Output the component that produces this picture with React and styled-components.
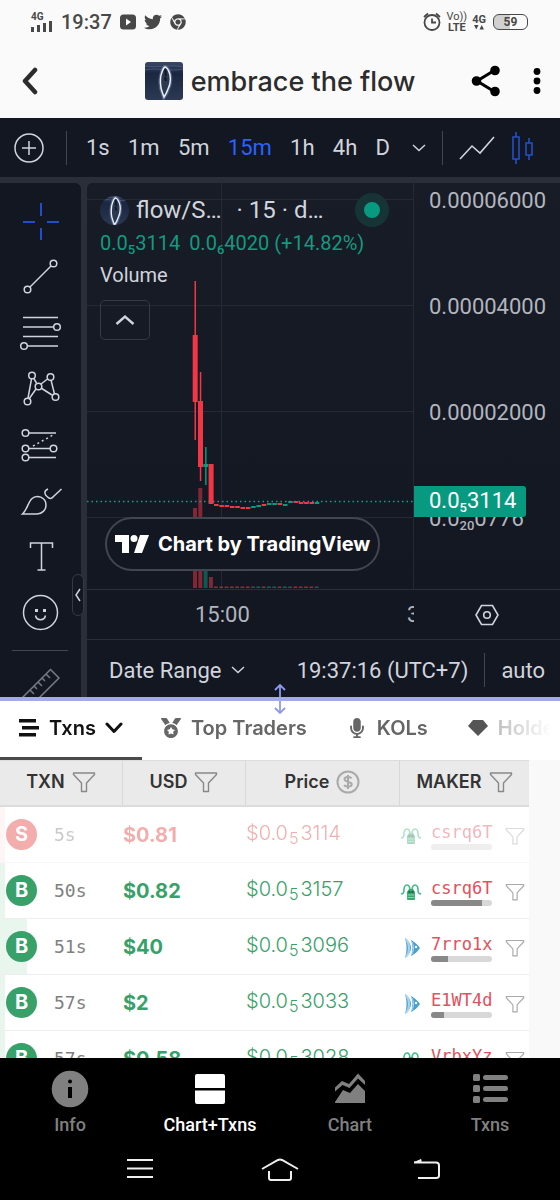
import React from "react";
import styled, { createGlobalStyle, css } from "styled-components";
import { FaChrome, FaMedal, FaMicrophone, FaTwitter } from "react-icons/fa";

const intervals = ["1s", "1m", "5m", "15m", "1h", "4h", "D"];

const trades = [
  { side: "S", age: "5s", usd: "$0.81", price: "3114", pool: "bug", maker: "csrq6T", share: 0, depth: 5, fresh: true },
  { side: "B", age: "50s", usd: "$0.82", price: "3157", pool: "bug", maker: "csrq6T", share: 83, depth: 5 },
  { side: "B", age: "51s", usd: "$40", price: "3096", pool: "fish", maker: "7rro1x", share: 27, depth: 27 },
  { side: "B", age: "57s", usd: "$2", price: "3033", pool: "fish", maker: "E1WT4d", share: 21, depth: 5 },
  { side: "B", age: "57s", usd: "$0.58", price: "3028", pool: "bug", maker: "VrbxYz", share: 40, depth: 5 },
];

const RED = "#f23645";
const GREEN = "#089981";

// [colour, high, low, top, bottom]
const bigCandles = [
  [RED, 98, 257, 152, 219],
  [RED, 189, 298, 218, 284],
  [GREEN, 264, 302, 281, 284],
  [RED, 281, 321, 281, 321],
];

// [is up, y]
const smallCandles = [
  [0, 321], [0, 322], [0, 322], [0, 323], [0, 323], [0, 324], [0, 324],
  [1, 323], [1, 322], [0, 321], [1, 320], [1, 320], [0, 320], [1, 321],
  [1, 318], [0, 318], [0, 319], [0, 319], [0, 319], [1, 319],
];

// [colour, top]
const volumes = [
  [RED, 325],
  [RED, 305],
  [GREEN, 345],
  [RED, 394],
];

function FeatherArt() {
  return (
    <>
      <defs>
        <linearGradient id="night" x1="0" y1="0" x2="0" y2="1">
          <stop offset="0" stopColor="#3a4868" />
          <stop offset="0.3" stopColor="#1b2741" />
          <stop offset="1" stopColor="#2b3953" />
        </linearGradient>
      </defs>
      <rect width="38" height="38" fill="url(#night)" />
      <path d="M0 8c10-3 26 2 38-1M0 4c12 2 26-2 38 1" stroke="#5b6b8c" fill="none" opacity="0.6" />
      <path d="M20 5c3 1 4 4 5 8 1 6 0 10-2 14-1 3-2 5-4 8-1-3-2-5-3-9-1-6-1-11 1-16 1-2 1-4 3-5z" fill="none" stroke="#8fa3c4" strokeWidth="4" opacity="0.4" />
      <path d="M20 5c3 1 4 4 5 8 1 6 0 10-2 14-1 3-2 5-4 8-1-3-2-5-3-9-1-6-1-11 1-16 1-2 1-4 3-5z" fill="#2c3850" stroke="#e8eef8" strokeWidth="1.5" />
      <path d="M20 7c1 2 0 4 1 7M20 15l1 4" stroke="#0f1626" strokeWidth="2" fill="none" />
    </>
  );
}

function Funnel({ size = 24, color = "#888" }) {
  return (
    <svg width={size} height={size} viewBox="0 0 24 24" fill="none" stroke={color} strokeWidth="1.4" strokeLinejoin="round">
      <path d="M1.5 3h21v1.5L14.5 13v8.5h-5V13L1.5 4.5z" />
    </svg>
  );
}

function PoolIcon({ kind }) {
  if (kind === "fish") {
    return (
      <svg width="22" height="22" viewBox="0 0 22 22">
        <path d="M5 1c4 3 6 7 6 10s-2 7-6 10c2-6 2-14 0-20z" fill="#4fa3d6" />
        <path d="M11 3c4 2 7 5 9 8-2 3-5 6-9 8 2-5 2-11 0-16z" fill="#4aa0d4" />
        <path d="M6 2c4 5 4 13 0 18" stroke="#a9d6ef" strokeWidth="2" fill="none" />
        <path d="M12 5c2 4 2 8 0 12" stroke="#a9d6ef" strokeWidth="1" fill="none" />
        <circle cx="16" cy="10" r="1.2" fill="#fff" />
      </svg>
    );
  }
  return (
    <svg width="22" height="22" viewBox="0 0 22 22" fill="none">
      <path d="M1 13c2 0 3-1 3-4s1-5 3-5 3 3 3 6M21 13c-2 0-3-1-3-4s-1-5-3-5-3 3-3 6" stroke="#3fbd84" strokeWidth="1.6" />
      <path d="M9 8h4l2 3v7q0 1-1 1H8q-1 0-1-1v-7z" fill="#3aa873" />
      <path d="M7.5 14h7M7.5 16.5h7" stroke="#86d3ab" />
      <path d="M8.5 11h2M11.5 11h2" stroke="#174a36" strokeWidth="1.6" />
    </svg>
  );
}

const tools = [
  {
    label: "Cross",
    active: true,
    art: <path d="M29 9v13M29 34v12M11 28h12M35 28h12" />,
  },
  {
    label: "Trend line",
    art: (
      <>
        <path d="M18 37 39 16" />
        <circle cx="15.5" cy="39.5" r="3.3" />
        <circle cx="41.5" cy="13.5" r="3.3" />
      </>
    ),
  },
  {
    label: "Fib retracement",
    art: (
      <>
        <path d="M11 11.5h35M11 21h31M11 30.5h35M16 40h30" />
        <circle cx="45" cy="21" r="3.3" />
        <circle cx="12" cy="40" r="3.3" />
      </>
    ),
  },
  {
    label: "XABCD pattern",
    art: (
      <>
        <path d="M21.5 16l3 5M29 22l6.5-5M39 18l3.5 14M29 26l11 7M24 27l-7 10M19.5 17l-3.5 19" />
        <circle cx="20" cy="13.5" r="3.3" />
        <circle cx="38.5" cy="15" r="3.3" />
        <circle cx="26.5" cy="24.5" r="3.3" />
        <circle cx="15.5" cy="39.5" r="3.3" />
        <circle cx="43.5" cy="35" r="3.3" />
      </>
    ),
  },
  {
    label: "Long position",
    art: (
      <>
        <path d="M17 15h27M17 30.5h21M17 39.5h27" />
        <path d="M21 28 42 16.5" strokeDasharray="2 3" />
        <circle cx="13.5" cy="15" r="3.3" />
        <circle cx="13.5" cy="30.5" r="3.3" />
        <circle cx="41.5" cy="30.5" r="3.3" />
        <circle cx="13.5" cy="39.5" r="3.3" />
      </>
    ),
  },
  {
    label: "Brush",
    art: (
      <>
        <path d="M10.5 40H25a9 9 0 0 0 9-9 8.5 8.5 0 0 0-14.5-6C16 28.500 15 36 10.500 40z" />
        <path d="M36 15c-4 1.5-4 5-1 7.5 3 3 4.5 2.5 7-.5l7.500-7" />
      </>
    ),
  },
  {
    label: "Text",
    art: <path d="M18.5 18v-5h22v5M29.5 13v27M25.5 40h8" />,
  },
  {
    label: "Icons",
    art: (
      <>
        <circle cx="28.5" cy="26.5" r="17" />
        <path d="M23.5 29.5c1 5.500 9 5.500 10 0" />
        <path d="M24.5 23v3M32.5 23v3" strokeWidth="3" />
      </>
    ),
  },
];

function StatusBar() {
  return (
    <StyledStatus>
      <Signal>
        <small>4G</small>
        <svg width="22" height="11" viewBox="0 0 22 11" fill="#484848">
          <rect x="0" y="6" width="3" height="5" />
          <rect x="6" y="4" width="3" height="7" />
          <rect x="12" y="2" width="3" height="9" />
          <rect x="18" y="0" width="3" height="11" />
        </svg>
      </Signal>
      <Clock>19:37</Clock>
      <svg width="16" height="16" viewBox="0 0 16 16">
        <rect width="16" height="15" y="0.5" rx="3.5" fill="#484848" />
        <path d="M6 4.500v7l5-3.500z" fill="#fff" />
      </svg>
      <FaTwitter size={18} />
      <FaChrome size={16} />
      <StatusSpacer />
      <StatusGroup>
        <svg width="18" height="20" viewBox="0 0 18 20" fill="none" stroke="#484848" strokeWidth="1.8">
          <circle cx="9" cy="10.5" r="7.5" />
          <path d="M9 6.500v4h4M1 5l4-3.500M17 5l-4-3.500" />
        </svg>
        <StackedText>
          <span>Vo))</span>
          <strong>LTE</strong>
        </StackedText>
        <StackedText>
          <strong>4G</strong>
          <svg width="10" height="5" viewBox="0 0 10 5" fill="#484848">
            <path d="M0 0h4.500L2.300 4.500zM5.500 4.500H10L7.700 0z" />
          </svg>
        </StackedText>
        <Battery>59</Battery>
      </StatusGroup>
    </StyledStatus>
  );
}

function Header() {
  return (
    <StyledHeader>
      <IconButton aria-label="Back">
        <svg width="22" height="28" viewBox="0 0 22 28" fill="none" stroke="#2c2c2c" strokeWidth="4.5" strokeLinecap="round" strokeLinejoin="round">
          <path d="M16 3 6 14l10 11" />
        </svg>
      </IconButton>
      <Title>
        <TokenImage viewBox="0 0 38 38">
          <FeatherArt />
        </TokenImage>
        embrace the flow
      </Title>
      <HeaderActions>
        <IconButton aria-label="Share">
          <svg width="30" height="32" viewBox="0 0 30 32" stroke="#000" strokeWidth="3">
            <path d="M24 5 6 16l18 11" fill="none" />
            <circle cx="24" cy="5.5" r="3.3" />
            <circle cx="5.500" cy="16" r="3.3" />
            <circle cx="24" cy="26.5" r="3.3" />
          </svg>
        </IconButton>
        <IconButton aria-label="More">
          <svg width="8" height="28" viewBox="0 0 8 28">
            <circle cx="4" cy="4.5" r="3.4" />
            <circle cx="4" cy="14" r="3.4" />
            <circle cx="4" cy="23.5" r="3.4" />
          </svg>
        </IconButton>
      </HeaderActions>
    </StyledHeader>
  );
}

function ChartToolbar() {
  return (
    <StyledToolbar>
      <AddButton aria-label="Add symbol">
        <svg width="30" height="30" viewBox="0 0 30 30" fill="none" stroke="#d1d4dc" strokeWidth="1.5">
          <circle cx="15" cy="15" r="14" />
          <path d="M8 15h14M15 8v14" />
        </svg>
      </AddButton>
      <Rule />
      <Intervals>
        {intervals.map((item) => (
          <Interval key={item} $active={item === "15m"}>
            {item}
          </Interval>
        ))}
      </Intervals>
      <IconButton aria-label="More intervals">
        <svg width="14" height="8" viewBox="0 0 14 8" fill="none" stroke="#d1d4dc" strokeWidth="1.5">
          <path d="m1 1 6 5.500L13 1" />
        </svg>
      </IconButton>
      <Rule />
      <IconButton aria-label="Line chart">
        <svg width="36" height="26" viewBox="0 0 36 26" fill="none" stroke="#d1d4dc" strokeWidth="1.6">
          <path d="M1 24 13 11l8 7L35 2" />
        </svg>
      </IconButton>
      <IconButton aria-label="Candles">
        <svg width="22" height="34" viewBox="0 0 22 34" fill="none" stroke="#2450c8" strokeWidth="1.6">
          <path d="M2 6h6v22H2zM5 1v5M5 28v5M15 12h6v12h-6zM18 7v5M18 24v5" />
        </svg>
      </IconButton>
    </StyledToolbar>
  );
}

function Candles() {
  return (
    <svg width="100%" height="407" viewBox="0 0 327 407" preserveAspectRatio="xMinYMin slice">
      <path d="M0 16.5h327M0 122.5h327M0 228.5h327M0 334.5h327M134.5 0v407M326.5 0v407" stroke="#252933" />
      {volumes.map(([color, top], i) => (
        <rect key={i} x={106 + i * 5.3} y={top} width="4" height={405 - top} fill={color} opacity="0.5" />
      ))}
      {smallCandles.map(([up, y], i) => (
        <g key={i} fill={up ? GREEN : RED}>
          <rect x={127 + i * 5.3} y={y} width="4.6" height="2" />
          <rect x={127 + i * 5.3} y="403.5" width="3.8" height="1.5" opacity="0.6" />
        </g>
      ))}
      {bigCandles.map(([color, high, low, top, bottom], i) => (
        <g key={i} fill={color}>
          <rect x={107.5 + i * 5.3} y={high} width="1.5" height={low - high} />
          <rect x={105.7 + i * 5.3} y={top} width="5" height={bottom - top} />
        </g>
      ))}
      <path d="M0 318.5h327" stroke="#12a08a" strokeWidth="1.4" strokeDasharray="1.5 3" />
    </svg>
  );
}

function Chart() {
  return (
    <StyledChart>
      <Tools aria-label="Drawing tools">
        {tools.map((tool) => (
          <Tool key={tool.label} aria-label={tool.label} $active={tool.active}>
            <svg width="56" height="56" viewBox="0 0 56 56">
              {tool.art}
            </svg>
          </Tool>
        ))}
        <ToolRule />
        <Tool aria-label="Measure" $dim>
          <svg width="56" height="56" viewBox="0 0 56 56">
            <path d="M38.5 18.5 47 27 19 55l-8.500-8.500zM34 23l4 4M30 27l3 3M26 31l4 4M22 35l3 3M18 39l4 4" />
          </svg>
        </Tool>
      </Tools>
      <Main>
        <Pane>
          <Candles />
          <Overlay>
            <Symbol>
              <svg width="29" height="29" viewBox="3 3 32 32">
                <FeatherArt />
              </svg>
              <span>flow/S…</span>
              <span>· 15 · d…</span>
              <LiveDot />
            </Symbol>
            <Quote>
              <span>
                0.0<sub>5</sub>3114
              </span>
              <span>
                0.0<sub>6</sub>4020 (+14.82%)
              </span>
            </Quote>
            <Study>Volume</Study>
            <Collapse aria-label="Collapse legend">
              <svg width="20" height="12" viewBox="0 0 20 12" fill="none" stroke="#d1d4dc" strokeWidth="2.4">
                <path d="m1.5 10 8.500-7.500 8.500 7.500" />
              </svg>
            </Collapse>
            <Credit href="#tradingview">
              <svg width="34" height="18" viewBox="0 0 34 18" fill="#fff">
                <path d="M0 0h14v18H7V7H0z" />
                <circle cx="19" cy="3.5" r="3.5" />
                <path d="M25 0h9l-7 18h-8z" />
              </svg>
              Chart by TradingView
            </Credit>
          </Overlay>
        </Pane>
        <PriceAxis>
          <span>0.00006000</span>
          <span>0.00004000</span>
          <span>0.00002000</span>
          <span>
            0.0<sub>20</sub>0776
          </span>
          <LastPrice>
            0.0<sub>5</sub>3114
          </LastPrice>
        </PriceAxis>
        <TimeAxis>
          <span>15:00</span>
          <NextTick>3</NextTick>
        </TimeAxis>
        <AxisCorner>
          <IconButton aria-label="Axis settings">
            <svg width="24" height="22" viewBox="0 0 24 22" fill="none" stroke="#d1d4dc" strokeWidth="1.6">
              <path d="M6.5 1.5h11L23 11l-5.5 9.5h-11L1 11z" />
              <circle cx="12" cy="11" r="3.3" />
            </svg>
          </IconButton>
        </AxisCorner>
        <DateBar>
          <DateButton>
            Date Range
            <svg width="14" height="8" viewBox="0 0 14 8" fill="none" stroke="#d1d4dc" strokeWidth="1.5">
              <path d="m1 1 6 5.5L13 1" />
            </svg>
          </DateButton>
          <DateButton>19:37:16 (UTC+7)</DateButton>
          <Rule />
          <DateButton>auto</DateButton>
        </DateBar>
      </Main>
      <PanelHandle aria-label="Hide drawing tools">
        <svg width="6" height="14" viewBox="0 0 6 14" fill="none" stroke="#d1d4dc" strokeWidth="1.5">
          <path d="M5 1 1 7l4 6" />
        </svg>
      </PanelHandle>
    </StyledChart>
  );
}

function Tabs() {
  return (
    <StyledTabs role="tablist">
      <Tab role="tab" aria-selected="true" $active>
        <svg width="22" height="20" viewBox="0 0 22 20" fill="#111">
          <path d="M1 1h17v3.5H1zM4 8h17v3.5H4zM1 15h17v3.5H1z" />
        </svg>
        Txns
        <svg width="18" height="12" viewBox="0 0 18 12" fill="none" stroke="#111" strokeWidth="3" strokeLinecap="round" strokeLinejoin="round">
          <path d="m2 2 7 7.5L16 2" />
        </svg>
      </Tab>
      <Tab role="tab">
        <FaMedal size={20} />
        Top Traders
      </Tab>
      <Tab role="tab">
        <FaMicrophone size={20} />
        KOLs
      </Tab>
      <Tab role="tab">
        <svg width="20" height="18" viewBox="0 0 20 18" fill="#555">
          <path d="M5 1h10l5 6-10 10L0 7z" />
        </svg>
        Holders
      </Tab>
    </StyledTabs>
  );
}

function Trades() {
  return (
    <TableArea>
      <Table>
        <colgroup>
          <Col $width={122} />
          <Col $width={123} />
          <Col $width={154} />
          <col />
        </colgroup>
        <thead>
          <tr>
            <Th>
              <SortButton>
                TXN <Funnel />
              </SortButton>
            </Th>
            <Th>
              <SortButton>
                USD <Funnel />
              </SortButton>
            </Th>
            <Th>
              <SortButton>
                Price
                <svg width="24" height="24" viewBox="0 0 24 24" fill="none" stroke="#aaa" strokeWidth="2">
                  <circle cx="12" cy="12" r="10.5" />
                  <path d="M15.5 8.5c-1-2-7-2-7 .7 0 3.200 7.200 1.800 7.200 5 0 3-6.500 2.800-7.400.6M12 5v14" />
                </svg>
              </SortButton>
            </Th>
            <Th>
              <SortButton>
                MAKER <Funnel />
              </SortButton>
            </Th>
          </tr>
        </thead>
        <tbody>
          {trades.map((trade, i) => (
            <Row key={i} $side={trade.side} $depth={trade.depth} $fresh={trade.fresh}>
              <td>
                <TxnCell>
                  <Side $side={trade.side}>{trade.side}</Side>
                  <Age>{trade.age}</Age>
                </TxnCell>
              </td>
              <td>
                <Usd>{trade.usd}</Usd>
              </td>
              <td>
                <Price>
                  $0.0<small>5</small>
                  {trade.price}
                </Price>
              </td>
              <td>
                <MakerCell>
                  <PoolIcon kind={trade.pool} />
                  <Maker href={`#${trade.maker}`}>
                    {trade.maker}
                    <Meter>
                      <MeterFill style={{ width: `${trade.share}%` }} />
                    </Meter>
                  </Maker>
                  <FilterButton aria-label={`Filter ${trade.maker}`}>
                    <Funnel size={20} color="#aaa" />
                  </FilterButton>
                </MakerCell>
              </td>
            </Row>
          ))}
        </tbody>
      </Table>
    </TableArea>
  );
}

function BottomNav() {
  return (
    <StyledNav>
      <NavLink href="#info">
        <svg width="38" height="38" viewBox="0 0 38 38">
          <circle cx="19" cy="19" r="18.3" fill="#808080" />
          <circle cx="19" cy="11.5" r="2" />
          <path d="M17 17h4v11h-4z" />
        </svg>
        Info
      </NavLink>
      <NavLink href="#chart-txns" $active>
        <svg width="38" height="38" viewBox="0 0 38 38" fill="#fff">
          <path d="M6 4h26a2 2 0 0 1 2 2v12H4V6a2 2 0 0 1 2-2zM4 20.5h30V32a2 2 0 0 1-2 2H6a2 2 0 0 1-2-2z" />
        </svg>
        Chart+Txns
      </NavLink>
      <NavLink href="#chart">
        <svg width="38" height="38" viewBox="0 0 38 38" fill="#808080">
          <path d="M4 33v-1l8-12 7 3 8-9 7 7v12zM4 21.500v-4L11 11l7 3 9-10.500 7 7.500v4l-7-6.500-8.500 9.500-7-3z" />
        </svg>
        Chart
      </NavLink>
      <NavLink href="#txns">
        <svg width="38" height="38" viewBox="0 0 38 38" fill="#808080">
          {[4, 15, 26].map((y) => (
            <g key={y}>
              <rect x="2" y={y} width="7" height="7" rx="1.5" />
              <rect x="12" y={y + 1} width="25" height="5" rx="2.5" />
            </g>
          ))}
        </svg>
        Txns
      </NavLink>
    </StyledNav>
  );
}

function SystemNav() {
  return (
    <StyledSystemNav>
      <IconButton aria-label="Recent apps">
        <svg width="26" height="22" viewBox="0 0 26 22" stroke="#eee" strokeWidth="2">
          <path d="M0 2h26M0 10.5h26M0 19h26" />
        </svg>
      </IconButton>
      <IconButton aria-label="Home">
        <svg width="38" height="26" viewBox="0 0 38 26" fill="none" stroke="#eee" strokeWidth="2">
          <path d="m1 13 16-9q2-1 4 0l16 9M8 15v7q0 2 2 2h18q2 0 2-2v-7" />
        </svg>
      </IconButton>
      <IconButton aria-label="Back">
        <svg width="40" height="22" viewBox="0 0 40 22" fill="none" stroke="#eee" strokeWidth="2">
          <path d="M14 4.5h22q3 0 3 3v10q0 2.500-3 2.500H18" />
          <path d="m14 4.5 7-3v3z" fill="#eee" strokeWidth="1" />
        </svg>
      </IconButton>
    </StyledSystemNav>
  );
}

export default function App() {
  return (
    <Page>
      <GlobalStyle />
      <StatusBar />
      <Header />
      <ChartToolbar />
      <Chart />
      <Divider>
        <svg width="14" height="32" viewBox="0 0 14 32" fill="none" stroke="#8d9af0" strokeWidth="1.8">
          <path d="M7 14V1.5M2 7l5-5 5 5M7 18v12M2 25l5 5 5-5" />
        </svg>
      </Divider>
      <Tabs />
      <Trades />
      <BottomNav />
      <SystemNav />
    </Page>
  );
}

const GlobalStyle = createGlobalStyle`
  * {
    box-sizing: border-box;
  }

  body {
    margin: 0;
    background-color: #fff;
    font-family: Roboto, "Liberation Sans", sans-serif;
  }

  button {
    border: 0;
    padding: 0;
    background: none;
    color: inherit;
    font: inherit;
    cursor: pointer;
  }

  a {
    color: inherit;
    text-decoration: none;
  }

  svg {
    display: block;
    flex: none;
  }

  sub {
    font-size: 13px;
    font-weight: 500;
    line-height: 1;
    vertical-align: -4px;
  }
`;

const Page = styled.div`
  height: 100vh;
  display: flex;
  flex-direction: column;
  overflow: hidden;
`;

const StyledStatus = styled.div`
  flex: none;
  height: 44px;
  padding: 0 32px 0 31px;
  display: flex;
  align-items: center;
  gap: 8px;
  background-color: #fafafa;
  color: #484848;
`;

const Signal = styled.div`
  display: flex;
  flex-direction: column;

  small {
    font-size: 10px;
    line-height: 8px;
    font-weight: 700;
  }
`;

const Clock = styled.span`
  font-size: 20px;
  font-weight: 500;
`;

const StatusSpacer = styled.div`
  flex: 1;
`;

const StatusGroup = styled.div`
  display: flex;
  align-items: center;
  gap: 5px;
`;

const StackedText = styled.div`
  display: flex;
  flex-direction: column;
  align-items: center;
  font-size: 11px;
  line-height: 11px;

  strong {
    font-weight: 700;
  }
`;

const Battery = styled.span`
  width: 35px;
  height: 16px;
  margin-left: 2px;
  border: 1px solid #484848;
  border-radius: 6px;
  background: linear-gradient(90deg, #d0d0d0 50%, #fafafa 50%);
  font-size: 12px;
  font-weight: 700;
  line-height: 14px;
  text-align: center;
`;

const StyledHeader = styled.header`
  flex: none;
  height: 74px;
  padding: 0 19px;
  display: grid;
  grid-template-columns: 1fr auto 1fr;
  align-items: center;
  background-color: #fafafa;
`;

const IconButton = styled.button`
  flex: none;
  display: flex;
  align-items: center;
  justify-self: start;
  justify-content: center;
`;

const HeaderActions = styled.div`
  justify-self: end;
  display: flex;
  align-items: center;
  gap: 32px;
`;

const Title = styled.h1`
  margin: 0;
  display: flex;
  align-items: center;
  gap: 8px;
  color: #2c2c2c;
  font-family: Inter, "Liberation Sans", sans-serif;
  font-size: 27px;
  font-weight: 500;
  white-space: nowrap;
`;

const TokenImage = styled.svg`
  width: 38px;
  height: 38px;
  border-radius: 3px;
`;

const StyledToolbar = styled.div`
  flex: none;
  height: 65px;
  padding: 0 27px 0 7px;
  display: flex;
  align-items: center;
  gap: 16px;
  background-color: #131722;
  border-bottom: 6px solid #2a2e39;
  color: #d1d4dc;
`;

const AddButton = styled(IconButton)`
  width: 43px;
`;

const Rule = styled.span`
  flex: none;
  width: 1px;
  height: 34px;
  background-color: #434651;
`;

const Intervals = styled.div`
  flex: 1;
  padding: 0 6px 0 3px;
  display: flex;
  justify-content: space-between;
`;

const Interval = styled.button`
  color: ${(props) => (props.$active ? "#2962ff" : "#d1d4dc")};
  font-size: 22px;
  line-height: 28px;
`;

const StyledChart = styled.section`
  flex: none;
  position: relative;
  display: flex;
  gap: 6px;
  background-color: #2a2e39;
  color: #d1d4dc;
  font-size: 22px;
`;

const Tools = styled.aside`
  flex: none;
  width: 81px;
  height: 0;
  min-height: 514px;
  padding: 11px 12px 0;
  overflow: hidden;
  background-color: #131722;
  border-top-right-radius: 6px;
`;

const Tool = styled.button`
  display: block;
  fill: none;
  stroke: ${(props) => (props.$active ? "#2962ff" : props.$dim ? "#787b86" : "#d1d4dc")};
  stroke-width: 1.5px;
`;

const ToolRule = styled.div`
  width: 56px;
  height: 1px;
  margin: 8px 0 0;
  background-color: #434651;
`;

const Main = styled.div`
  flex: 1;
  min-width: 0;
  display: grid;
  grid-template-columns: minmax(0, 1fr) 146px;
  background-color: #131722;
  border-top-left-radius: 6px;
`;

const Pane = styled.div`
  display: grid;
  height: 407px;
  overflow: hidden;
  border-bottom: 1px solid #2a2e39;
  background: linear-gradient(#181c27, #131722);
  border-top-left-radius: 6px;

  > * {
    grid-area: 1 / 1;
  }
`;

const Overlay = styled.div`
  padding: 10px 13px 19px;
  display: flex;
  flex-direction: column;
  align-items: flex-start;
`;

const Symbol = styled.div`
  width: 100%;
  height: 34px;
  padding-right: 12px;
  display: flex;
  align-items: center;
  gap: 7px;
  font-size: 24px;
  white-space: nowrap;

  svg {
    border-radius: 50%;
  }

  span:nth-of-type(2) {
    flex: 1;
    padding-left: 8px;
  }
`;

const LiveDot = styled.i`
  width: 34px;
  height: 34px;
  border: 9px solid #163436;
  border-radius: 50%;
  background-color: #089981;
`;

const Quote = styled.div`
  display: flex;
  gap: 9px;
  color: #14997f;
  font-size: 20px;
  line-height: 32px;
  white-space: nowrap;
`;

const Study = styled.div`
  font-size: 20px;
  line-height: 32px;
`;

const Collapse = styled.button`
  width: 50px;
  height: 40px;
  margin-top: 9px;
  display: flex;
  align-items: center;
  justify-content: center;
  border: 1px solid #363a45;
  border-radius: 5px;
`;

const Credit = styled.a`
  height: 54px;
  margin: auto 0 0 5px;
  padding: 0 8px;
  display: flex;
  align-items: center;
  gap: 9px;
  border: 2px solid #434651;
  border-radius: 27px;
  background-color: #131722;
  color: #fff;
  font-family: Inter, "Liberation Sans", sans-serif;
  font-size: 20px;
  font-weight: 700;
  white-space: nowrap;
`;

const PriceAxis = styled.div`
  position: relative;
  height: 407px;
  padding: 6px 0 0 15px;
  display: flex;
  flex-direction: column;
  gap: 82px;
  border-bottom: 1px solid #2a2e39;
  background: linear-gradient(#181c27, #131722);
  color: #b2b5be;
  line-height: 24px;
`;

const LastPrice = styled.strong`
  position: absolute;
  top: 303px;
  left: 0;
  width: 112px;
  height: 31px;
  padding-left: 15px;
  border-radius: 0 3px 3px 0;
  background-color: #089981;
  color: #fff;
  font-weight: 400;
  line-height: 29px;
`;

const TimeAxis = styled.div`
  height: 49px;
  padding-left: 108px;
  display: flex;
  align-items: center;
  justify-content: space-between;
  color: #b2b5be;
`;

const NextTick = styled.span`
  width: 7px;
  overflow: hidden;
`;

const AxisCorner = styled.div`
  display: flex;
  align-items: center;
  justify-content: center;
`;

const DateBar = styled.div`
  grid-column: 1 / -1;
  height: 58px;
  padding: 3px 15px 0 22px;
  display: flex;
  align-items: center;
  gap: 16px;
  border-top: 1px solid #2a2e39;
`;

const DateButton = styled.button`
  display: flex;
  align-items: center;
  gap: 10px;
  white-space: nowrap;

  &:first-of-type {
    margin-right: auto;
  }
`;

const PanelHandle = styled.button`
  position: absolute;
  top: 391px;
  left: 72px;
  width: 12px;
  height: 42px;
  display: flex;
  align-items: center;
  justify-content: center;
  border: 1px solid #363a45;
  border-radius: 6px;
  background-color: #131722;
`;

const Divider = styled.div`
  flex: none;
  position: relative;
  z-index: 1;
  height: 4px;
  background-color: #a3a9ea;

  svg {
    position: absolute;
    top: -14px;
    left: calc(50% - 7px);
  }
`;

const StyledTabs = styled.div`
  flex: none;
  height: 59px;
  display: flex;
  gap: 40px;
  overflow: hidden;
  background-color: #fff;
  mask-image: linear-gradient(90deg, #000 calc(100% - 72px), rgba(0, 0, 0, 0.4) calc(100% - 60px), transparent calc(100% - 8px));
`;

const Tab = styled.button`
  flex: none;
  padding-bottom: 6px;
  display: flex;
  align-items: center;
  gap: 10px;
  color: #666;
  font-family: Inter, "Liberation Sans", sans-serif;
  font-size: 20px;
  font-weight: 600;
  white-space: nowrap;

  ${(props) =>
    props.$active &&
    css`
      gap: 9px;
      margin-right: -21px;
      padding: 0 19px 3px 18px;
      border-bottom: 3px solid #4a4a4a;
      color: #111;
    `}
`;

const TableArea = styled.main`
  flex: 1;
  min-height: 0;
  padding-right: 31px;
  overflow: hidden;
  background-color: #f9f9f9;
`;

const Table = styled.table`
  width: 100%;
  table-layout: fixed;
  border-collapse: separate;
  border-spacing: 0;
  background-color: #fff;

  td {
    height: 56px;
    padding: 0 0 0 1px;
    border-bottom: 1px solid #eee;
  }
`;

const Col = styled.col`
  width: ${(props) => props.$width}px;
`;

const Th = styled.th`
  height: 47px;
  padding: 0 0 3px;
  background-color: #eaeaea;
  border-top: 1px solid #ddd;
  border-bottom: 2px solid #dcdcdc;

  & + & {
    border-left: 1px solid #d8d8d8;
  }
`;

const SortButton = styled.button`
  width: 100%;
  display: flex;
  align-items: center;
  justify-content: center;
  gap: 7px;
  color: #333;
  font-family: Inter, "Liberation Sans", sans-serif;
  font-size: 18px;
  font-weight: 600;
`;

const sideColor = (side) => (side === "B" ? "#38a169" : "#e53e3e");

const Row = styled.tr`
  color: ${(props) => sideColor(props.$side)};
  background: linear-gradient(
    90deg,
    ${(props) => (props.$side === "B" ? "#e8f6ee" : "#fdecec")} ${(props) => props.$depth}px,
    #fff ${(props) => props.$depth}px
  );
  opacity: ${(props) => (props.$fresh ? 0.42 : 1)};
`;

const TxnCell = styled.div`
  padding-left: 5px;
  display: flex;
  align-items: center;
  gap: 17px;
`;

const Side = styled.span`
  width: 31px;
  height: 31px;
  border-radius: 50%;
  background-color: ${(props) => sideColor(props.$side)};
  color: #fff;
  font-family: Inter, "Liberation Sans", sans-serif;
  font-size: 20px;
  font-weight: 700;
  line-height: 31px;
  text-align: center;
`;

const Age = styled.span`
  color: #808080;
  font-family: "DejaVu Sans Mono", "Liberation Mono", monospace;
  font-size: 18px;
`;

const Usd = styled.span`
  font-family: Inter, "Liberation Sans", sans-serif;
  font-size: 20px;
  font-weight: 700;
`;

const Price = styled.span`
  font-family: Inter, "Liberation Sans", sans-serif;
  font-size: 20px;
  font-weight: 300;

  small {
    margin: 0 2px 0 1px;
    font-size: 16px;
    vertical-align: -4px;
  }
`;

const MakerCell = styled.div`
  padding: 3px 4px 0 0;
  display: flex;
  align-items: center;
  gap: 9px;
`;

const Maker = styled.a`
  color: #e05260;
  font-family: "DejaVu Sans Mono", "Liberation Mono", monospace;
  font-size: 17px;
  line-height: 20px;
`;

const FilterButton = styled(IconButton)`
  margin-left: auto;
`;

const Meter = styled.div`
  height: 6px;
  margin-top: 2px;
  overflow: hidden;
  border-radius: 3px;
  background-color: #d8d8d8;
`;

const MeterFill = styled.div`
  height: 100%;
  background-color: #888;
`;

const StyledNav = styled.nav`
  flex: none;
  height: 82px;
  display: grid;
  grid-template-columns: repeat(4, 1fr);
  background-color: #000;
`;

const NavLink = styled.a`
  padding-top: 12px;
  display: flex;
  flex-direction: column;
  align-items: center;
  gap: 5px;
  color: ${(props) => (props.$active ? "#fff" : "#808080")};
  font-size: 18px;
  font-weight: 500;
  line-height: 24px;
`;

const StyledSystemNav = styled.div`
  flex: none;
  height: 60px;
  padding: 0 70px 3px;
  display: grid;
  grid-template-columns: repeat(3, 1fr);
  justify-items: center;
  background-color: #000;

  button {
    justify-self: center;
  }
`;
